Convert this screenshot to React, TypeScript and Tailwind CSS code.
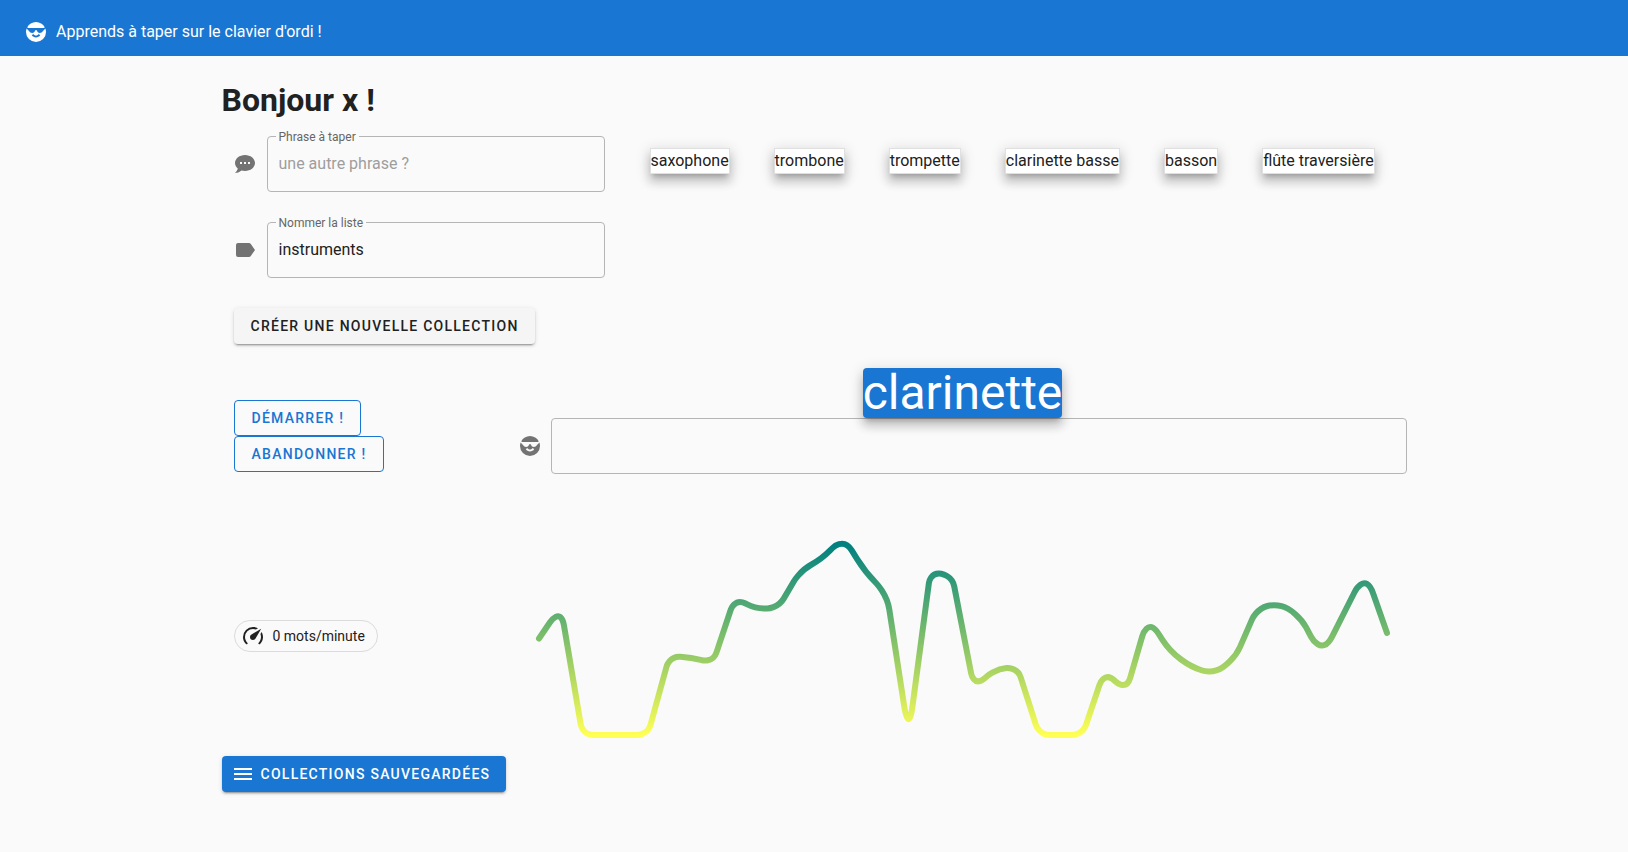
import type { ReactNode } from 'react';

const ICONS = {
  cool: 'M3.22,7.22C4.91,4.11 8.21,2 12,2C15.79,2 19.09,4.11 20.78,7.22L20,8H4L3.22,7.22M21.4,8.6C21.78,9.67 22,10.81 22,12A10,10 0 0,1 12,22A10,10 0 0,1 2,12C2,10.81 2.22,9.67 2.6,8.6L5,11C5.7,12.3 6.9,13 8.2,13C9.7,13 10.8,12 11,10.5C11.3,10 12.7,10 13,10.5C13.2,12 14.3,13 15.8,13C17.1,13 18.3,12.3 19,11L21.4,8.6M16.2,15.3L14.77,13.9C14.2,14.8 13.18,15.4 12,15.4C10.82,15.4 9.8,14.8 9.23,13.9L7.8,15.3C8.75,16.65 10.27,17.5 12,17.5C13.73,17.5 15.25,16.65 16.2,15.3Z',
  chat: 'M12,3C17.5,3 22,6.58 22,11C22,15.42 17.5,19 12,19C10.76,19 9.57,18.82 8.47,18.5C5.55,21 2,21 2,21C4.33,18.67 4.7,17.1 4.75,16.5C3.05,15.07 2,13.13 2,11C2,6.58 6.5,3 12,3M17,12V10H15V12H17M13,12V10H11V12H13M9,12V10H7V12H9Z',
  label:
    'M17.63,5.84C17.27,5.33 16.67,5 16,5H5A2,2 0 0,0 3,7V17A2,2 0 0,0 5,19H16C16.67,19 17.27,18.66 17.63,18.15L22,12L17.63,5.84Z',
  speed:
    'M12,16A3,3 0 0,1 9,13C9,11.88 9.61,10.9 10.5,10.39L20.21,4.77L14.68,14.35C14.18,15.33 13.17,16 12,16M12,3C13.81,3 15.5,3.5 16.97,4.32L14.87,5.53C14,5.19 13,5 12,5A8,8 0 0,0 4,13C4,15.21 4.89,17.21 6.34,18.65H6.35C6.74,19.04 6.74,19.67 6.35,20.06C5.96,20.45 5.32,20.45 4.93,20.07V20.07C3.12,18.26 2,15.76 2,13A10,10 0 0,1 12,3M22,13C22,15.76 20.88,18.26 19.07,20.07V20.07C18.68,20.45 18.05,20.45 17.66,20.06C17.27,19.67 17.27,19.04 17.66,18.65V18.65C19.11,17.2 20,15.21 20,13C20,12 19.81,11 19.46,10.1L20.67,8C21.5,9.5 22,11.18 22,13Z',
  menu: 'M3,6H21V8H3V6M3,11H21V13H3V11M3,16H21V18H3V16Z',
};

function Icon({ name }: { name: keyof typeof ICONS }) {
  return (
    <svg viewBox="0 0 24 24" aria-hidden="true" className="size-6 shrink-0 fill-current">
      <path d={ICONS[name]} />
    </svg>
  );
}

const WORDS = ['saxophone', 'trombone', 'trompette', 'clarinette basse', 'basson', 'flûte traversière'];

/* Typing speed samples, as heights above the baseline of the chart. */
const SPEEDS = [
  96.5, 128.5, 0, 0, 0, 0, 79, 77.5, 72, 137, 126, 127, 164, 176, 198, 163, 141, 0, 163, 159.5,
  47.5, 66, 68, 0, 0, 0, 64.5, 43, 118, 84, 68, 61, 76, 126, 132, 119, 78, 121, 164, 102,
];

type Point = { x: number; y: number };

function towards(from: Point, to: Point, radius: number): Point {
  const length = Math.hypot(to.x - from.x, to.y - from.y);
  return {
    x: from.x + ((to.x - from.x) * radius) / length,
    y: from.y + ((to.y - from.y) * radius) / length,
  };
}

function smoothPath(values: number[], width: number, baseline: number, inset: number, radius: number) {
  const step = (width - inset * 2) / (values.length - 1);
  const points = values.map((value, i) => ({ x: inset + step * i, y: baseline - value }));
  return points
    .map((point, i) => {
      if (i === 0) return `M${point.x} ${point.y}`;
      const prev = points[i - 1];
      const next = points[i + 1];
      if (!next || prev.y + next.y === point.y * 2) return `L${point.x} ${point.y}`;
      const shortest = Math.min(
        Math.hypot(prev.x - point.x, prev.y - point.y),
        Math.hypot(next.x - point.x, next.y - point.y),
      );
      const r = Math.min(radius, shortest / 2);
      const a = towards(point, prev, r);
      const b = towards(point, next, r);
      return `L${a.x} ${a.y}S${point.x} ${point.y} ${b.x} ${b.y}`;
    })
    .join('');
}

function Sparkline() {
  return (
    <svg viewBox="0 0 888 210" role="img" aria-label="Vitesse de frappe" className="block w-full">
      <defs>
        <linearGradient id="speed" x1="0" y1="0" x2="0" y2="1">
          <stop offset="0" stopColor="#008080" />
          <stop offset="1" stopColor="#ffff55" />
        </linearGradient>
      </defs>
      <path
        d={smoothPath(SPEEDS, 888, 203, 20, 29)}
        fill="none"
        stroke="url(#speed)"
        strokeWidth="6"
        strokeLinecap="round"
        strokeLinejoin="round"
      />
    </svg>
  );
}

function Field(props: { id: string; label: string; icon: ReactNode; placeholder?: string; value?: string }) {
  return (
    <div className="-ml-px flex items-center gap-[10px] text-[#737373]">
      {props.icon}
      <div className="relative flex-1">
        <label
          htmlFor={props.id}
          className="absolute -top-[7px] left-[9px] bg-[#fafafa] px-[3px] text-xs leading-4 text-[#666666]"
        >
          {props.label}
        </label>
        <input
          id={props.id}
          type="text"
          placeholder={props.placeholder}
          defaultValue={props.value}
          className="block h-14 w-full rounded-sm border border-[#b5b5b5] bg-transparent px-[11px] pb-[2px] text-base text-[#212121] outline-none placeholder:text-[#9e9e9e] focus:border-[#1976d2]"
        />
      </div>
    </div>
  );
}

const BUTTON = 'h-9 rounded-sm pr-4 text-sm font-medium tracking-[0.09em] uppercase';
const RAISED = 'shadow-[0_3px_1px_-2px_rgba(0,0,0,0.2),0_2px_2px_0_rgba(0,0,0,0.14),0_1px_5px_0_rgba(0,0,0,0.12)]';
const FLOATING = 'shadow-[0_5px_5px_-3px_rgba(0,0,0,0.2),0_8px_10px_1px_rgba(0,0,0,0.14),0_3px_14px_2px_rgba(0,0,0,0.12)]';

export default function App() {
  return (
    <div className="min-h-screen bg-[#fafafa] font-[Roboto,sans-serif] text-[#212121]">
      <header className="flex h-14 items-center gap-2 bg-[#1976d2] px-6 pt-2 text-white">
        <Icon name="cool" />
        <span>Apprends à taper sur le clavier d'ordi !</span>
      </header>

      <main className="mx-auto max-w-[1185px] pt-5">
        <h1 className="text-[32px] leading-12 font-bold">Bonjour x !</h1>

        <section className="flex items-start gap-[45px] pt-3 pl-3">
          <form className="w-[371px] shrink-0">
            <Field id="phrase" label="Phrase à taper" placeholder="une autre phrase ?" icon={<Icon name="chat" />} />
            <div className="mt-[30px]">
              <Field id="liste" label="Nommer la liste" value="instruments" icon={<Icon name="label" />} />
            </div>
            <button type="button" className={`${BUTTON} ${RAISED} mt-[30px] bg-[#f5f5f5] pl-[17px]`}>
              Créer une nouvelle collection
            </button>
          </form>
          <ul className="flex flex-wrap gap-x-11 gap-y-6 pt-3">
            {WORDS.map((word) => (
              <li key={word} className={`${FLOATING} border border-[#e0e0e0] bg-white leading-6`}>
                {word}
              </li>
            ))}
          </ul>
        </section>

        <section className="flex items-end pt-6 pl-3">
          <div className="flex w-[285px] shrink-0 flex-col items-start pb-[2px]">
            <button type="button" className={`${BUTTON} border border-[#1976d2] pl-[17px] text-[#1976d2]`}>
              Démarrer !
            </button>
            <button type="button" className={`${BUTTON} border border-[#1976d2] pl-[17px] text-[#1976d2]`}>
              Abandonner !
            </button>
          </div>
          <div className="flex flex-1 flex-col">
            <label
              htmlFor="saisie"
              className={`${FLOATING} z-10 self-center rounded-sm bg-[#1976d2] text-5xl leading-[50px] text-white`}
            >
              clarinette
            </label>
            <div className="-ml-px flex items-center gap-[9px] text-[#737373]">
              <Icon name="cool" />
              <input
                id="saisie"
                type="text"
                className="h-14 flex-1 rounded-sm border border-[#b5b5b5] bg-transparent px-[11px] text-[#212121] outline-none focus:border-[#1976d2]"
              />
            </div>
          </div>
        </section>

        <section className="flex items-center pt-[58px] pl-3">
          <div className="w-[285px] shrink-0">
            <span className="inline-flex h-8 items-center gap-2 rounded-full border border-[#dbdbdb] pr-3 pl-[6px] text-sm">
              <Icon name="speed" />
              0 mots/minute
            </span>
          </div>
          <div className="flex-1">
            <Sparkline />
          </div>
        </section>

        <button
          type="button"
          className={`${BUTTON} ${RAISED} mt-[14px] flex items-center gap-[6px] bg-[#1976d2] pl-[9px] text-white`}
        >
          <Icon name="menu" />
          Collections sauvegardées
        </button>
      </main>
    </div>
  );
}
